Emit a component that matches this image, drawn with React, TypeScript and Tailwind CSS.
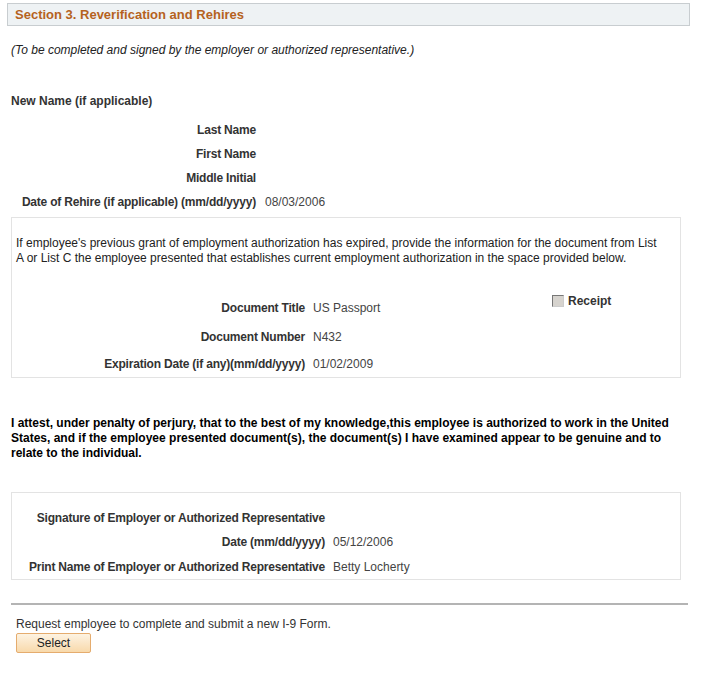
import React from 'react';

const font = { fontFamily: '"Liberation Sans", Arial, sans-serif' };

const Row = ({ label, value, labelW, h }: { label: string; value?: string; labelW: string; h: string }) => (
  <div className={`flex items-center ${h}`}>
    <div className={`${labelW} shrink-0 text-right font-bold tracking-[-0.2px] text-[#333]`}>{label}</div>
    {value && <div className="ml-[9px] text-[#444]">{value}</div>}
  </div>
);

const App = () => {
  return (
    <div style={font} className="w-[716px] min-h-[675px] bg-white pt-[3px] text-[12px] leading-[14px] text-[#333]">
      <div className="ml-[7px] w-[683px] h-[23px] flex items-center border border-[#c8cdd0] bg-[#eef2f4] pl-[7px]">
        <span className="text-[13px] font-bold text-[#b5621e]">Section 3. Reverification and Rehires</span>
      </div>

      <p className="ml-[11px] mt-[17px] italic text-[#222]">
        (To be completed and signed by the employer or authorized representative.)
      </p>

      <p className="ml-[11px] mt-[37px] font-bold text-[#333]">New Name (if applicable)</p>

      <div className="mt-[10px]">
        <Row label="Last Name" labelW="w-[256px]" h="h-[24px]" />
        <Row label="First Name" labelW="w-[256px]" h="h-[24px]" />
        <Row label="Middle Initial" labelW="w-[256px]" h="h-[24px]" />
        <Row label="Date of Rehire (if applicable) (mm/dd/yyyy)" value="08/03/2006" labelW="w-[256px]" h="h-[24px]" />
      </div>

      <div className="ml-[11px] mt-[3px] w-[670px] border border-[#e3e3e3] h-[161px]">
        <p className="pl-[4px] pr-[18px] pt-[18px] leading-[15px] text-[#222]">
          If employee's previous grant of employment authorization has expired, provide the information for the document from List A or List C the employee presented that establishes current employment authorization in the space provided below.
        </p>
        <div className="mt-[27px]">
          <div className="flex h-[29px]">
            <div className="flex items-center w-[540px]">
              <div className="w-[293px] shrink-0 text-right font-bold tracking-[-0.2px] text-[#333]">Document Title</div>
              <div className="ml-[8px] text-[#444]">US Passport</div>
            </div>
            <div className="flex items-center self-start h-[14px] mt-[1px]">
              <span className="inline-block w-[12px] h-[12px] border border-t-[#777] border-l-[#777] border-b-[#ccc] border-r-[#ccc] bg-[#d6d3ce]" />
              <span className="ml-[4px] font-bold text-[#333]">Receipt</span>
            </div>
          </div>
          <div className="flex items-center h-[29px]">
            <div className="w-[293px] shrink-0 text-right font-bold tracking-[-0.2px] text-[#333]">Document Number</div>
            <div className="ml-[8px] text-[#444]">N432</div>
          </div>
          <div className="flex items-center h-[26px]">
            <div className="w-[293px] shrink-0 text-right font-bold tracking-[-0.2px] text-[#333]">Expiration Date (if any)(mm/dd/yyyy)</div>
            <div className="ml-[8px] text-[#444]">01/02/2009</div>
          </div>
        </div>
      </div>

      <p className="ml-[11px] mt-[38px] w-[660px] font-bold leading-[15px] text-black">
        I attest, under penalty of perjury, that to the best of my knowledge,this employee is authorized to work in the United States, and if the employee presented document(s), the document(s) I have examined appear to be genuine and to relate to the individual.
      </p>

      <div className="ml-[11px] mt-[31px] w-[670px] border border-[#e3e3e3] pt-[13px]">
        <div className="flex items-center h-[24px]">
          <div className="w-[313px] shrink-0 text-right font-bold tracking-[-0.2px] text-[#333]">Signature of Employer or Authorized Representative</div>
        </div>
        <div className="flex items-center h-[24px]">
          <div className="w-[313px] shrink-0 text-right font-bold tracking-[-0.2px] text-[#333]">Date (mm/dd/yyyy)</div>
          <div className="ml-[8px] text-[#444]">05/12/2006</div>
        </div>
        <div className="flex items-center h-[25px]">
          <div className="w-[313px] shrink-0 text-right font-bold tracking-[-0.2px] text-[#333]">Print Name of Employer or Authorized Representative</div>
          <div className="ml-[8px] text-[#444]">Betty Locherty</div>
        </div>
      </div>

      <div className="ml-[11px] mt-[23px] w-[677px] h-[2px] bg-[#b4b4b4]" />

      <p className="ml-[16px] mt-[12px] text-[#333]">Request employee to complete and submit a new I-9 Form.</p>
      <button className="ml-[16px] mt-[2px] w-[75px] h-[20px] rounded-[2px] border border-[#e5ac6e] bg-gradient-to-b from-[#fdf3e2] to-[#f8d9ab] text-[12px] text-[#222]">
        Select
      </button>
    </div>
  );
};

export default App;
